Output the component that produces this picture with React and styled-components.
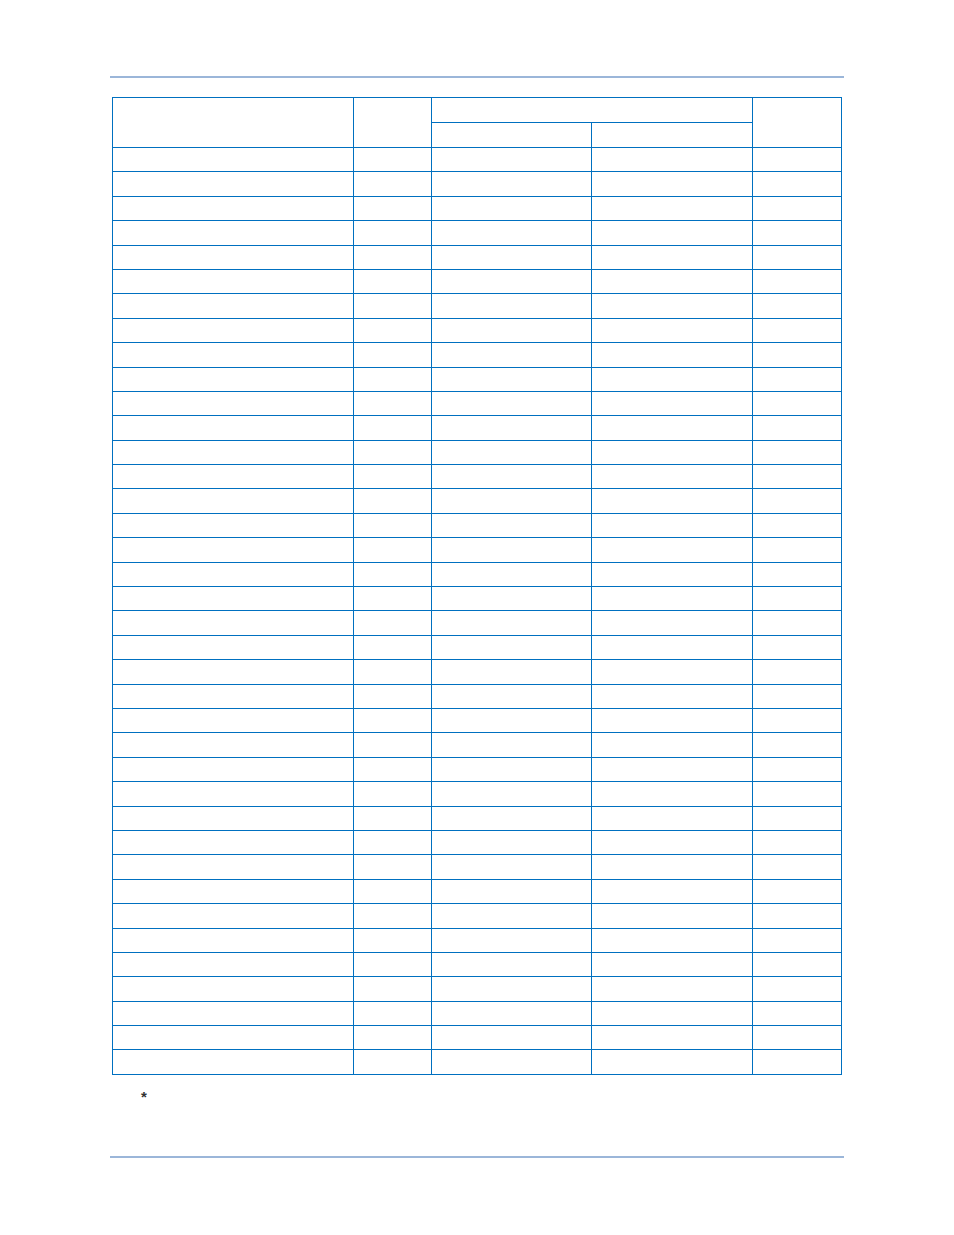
import styled, { createGlobalStyle } from 'styled-components';

const GlobalStyle = createGlobalStyle`
  body {
    margin: 0;
    background: #ffffff;
    font-family: "Liberation Sans", Arial, sans-serif;
  }
`;

const BODY_ROWS = 38;
const COLS = [241, 78, 160, 161, 89];

export default function App() {
  const rows = Array.from({ length: BODY_ROWS }, (_, i) => i);

  return (
    <>
      <GlobalStyle />
      <Page>
        <Rule />
        <Grid>
          <colgroup>
            {COLS.map((w, i) => (
              <col key={i} style={{ width: w }} />
            ))}
          </colgroup>
          <thead>
            <HeadRow>
              <Cell rowSpan={2} />
              <Cell rowSpan={2} />
              <Cell colSpan={2} />
              <Cell rowSpan={2} />
            </HeadRow>
            <HeadRow>
              <Cell />
              <Cell />
            </HeadRow>
          </thead>
          <tbody>
            {rows.map((r) => (
              <BodyRow key={r}>
                <Cell />
                <Cell />
                <Cell />
                <Cell />
                <Cell />
              </BodyRow>
            ))}
          </tbody>
        </Grid>
        <Note>*</Note>
        <BottomRule />
      </Page>
    </>
  );
}

const Page = styled.div`
  width: 954px;
  height: 1235px;
  padding-top: 76px;
  box-sizing: border-box;
`;

const Rule = styled.div`
  margin-left: 110px;
  width: 734px;
  height: 2px;
  background: #9bb6d9;
`;

const BottomRule = styled(Rule)`
  margin-top: 51px;
`;

const Grid = styled.table`
  margin: 19px 0 0 112px;
  width: 730px;
  table-layout: fixed;
  border-collapse: collapse;
  border: 1px solid #0070c0;
`;

const HeadRow = styled.tr`
  height: 25px;
`;

const BodyRow = styled.tr`
  height: 24.4px;
`;

const Cell = styled.td`
  border: 1px solid #0070c0;
  padding: 0;
`;

const Note = styled.div`
  margin: 14px 0 0 141px;
  height: 16px;
  font-size: 15px;
  font-weight: bold;
  line-height: 16px;
  color: #333333;
`;
